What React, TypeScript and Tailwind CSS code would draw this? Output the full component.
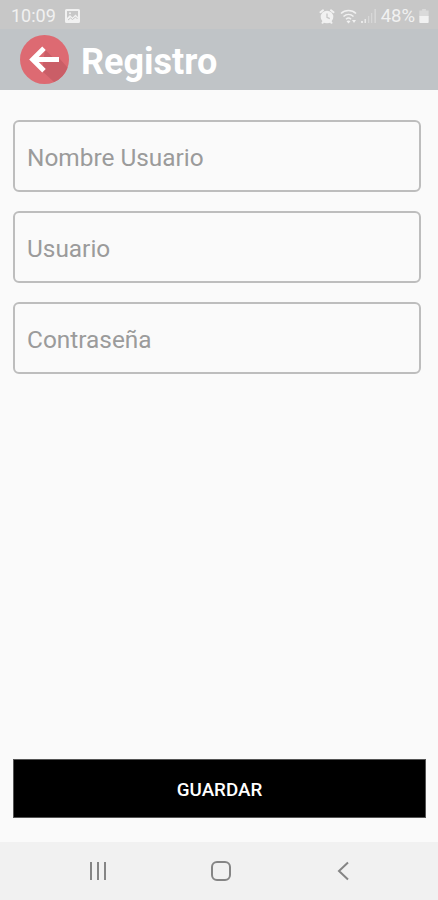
import React from 'react';

interface FieldProps {
    name: string;
    label: string;
    type?: string;
}

function Field({ name, label, type = 'text' }: FieldProps) {
    return (
        <input
            name={name}
            type={type}
            placeholder={label}
            className="block h-[72px] w-full rounded-md border-2 border-[#bdbdbd] bg-transparent px-3 pt-[3px] text-[24.4px] text-[#444] outline-none placeholder:text-[#9b9b9b]"
        />
    );
}

function StatusBar() {
    return (
        <div className="flex h-[29px] items-center justify-between bg-[#c7c7c7] pt-[3px] pr-[9px] pl-[11px] text-[#f1f1f1]">
            <div className="flex items-center gap-[9px]">
                <span className="text-[18px] leading-none">10:09</span>
                <svg className="h-[14px] w-[15px]" viewBox="0 0 15 14">
                    <path
                        fill="currentColor"
                        fillRule="evenodd"
                        d="M1.5 0h12A1.5 1.5 0 0 1 15 1.5v11a1.5 1.5 0 0 1-1.5 1.5h-12A1.5 1.5 0 0 1 0 12.5v-11A1.5 1.5 0 0 1 1.5 0zM2 2v10h11V2z"
                    />
                    <path fill="currentColor" d="M2 12V9l3-3 2.5 2.5L10.5 5.5 13 8v4z" />
                    <circle cx="5" cy="4.3" r="1" fill="currentColor" />
                    <path stroke="#c7c7c7" strokeWidth="1" fill="none" d="M3 11l2.5-2 2 1.5 3-2.5 2 2" />
                </svg>
            </div>
            <div className="flex items-center">
                {/* alarm */}
                <svg className="h-[15px] w-4" viewBox="0 0 16 15">
                    <circle cx="8" cy="8" r="6.3" fill="currentColor" />
                    <path
                        stroke="currentColor"
                        strokeWidth="2"
                        strokeLinecap="round"
                        d="M1.5 3.2L4 1.3M14.5 3.2L12 1.3M3.5 13.8l1.5-2M12.5 13.8l-1.5-2"
                    />
                    <path stroke="#c7c7c7" strokeWidth="1.3" fill="none" d="M8 4.5V8.3l2.8 1.4" />
                </svg>
                {/* wifi */}
                <svg className="ml-[5px] h-[15px] w-[17px]" viewBox="0 0 17 15" fill="none" stroke="currentColor">
                    <path strokeWidth="1.5" d="M1 4.5C5 .5 12 .5 16 4.5M3.500 7.500c3-2.800 7-2.800 10 0M6 10.200c1.500-1.400 3.500-1.400 5 0" />
                    <path fill="currentColor" stroke="none" d="M8.500 14.500l-2-2.300c1.200-1 2.800-1 4 0zM12 11h4l-2 3z" />
                </svg>
                {/* signal */}
                <svg className="ml-1 h-4 w-4" viewBox="0 0 16 16" fill="currentColor">
                    <path opacity=".8" d="M0 13h2v2H0zM3.500 11h1.500v4H3.500z" />
                    <path opacity=".4" d="M7 8h1.300v7H7zM10 5h1.300v10H10z" />
                    <path opacity=".5" d="M13.500 1h1.300v14h-1.300z" />
                </svg>
                <span className="ml-1 text-[18.5px] leading-none">48%</span>
                {/* battery */}
                <svg className="ml-1 h-[14px] w-[10px]" viewBox="0 0 10 15" fill="currentColor">
                    <path opacity=".45" d="M3 0h4v1.500h3V8H0V1.500h3z" />
                    <path d="M0 7.500h10V14a1 1 0 0 1-1 1H1a1 1 0 0 1-1-1z" />
                </svg>
            </div>
        </div>
    );
}

function Header() {
    return (
        <header className="flex h-[61px] items-center gap-3 bg-[#c0c4c7] pl-5">
            <button type="button" aria-label="Volver" className="shrink-0">
                <svg className="h-[49px] w-[49px]" viewBox="0 0 49 49">
                    <circle cx="24.5" cy="24.5" r="24.5" fill="#dd6a72" />
                    {/* long shadow under the arrow */}
                    <path fill="#ca5e67" d="M25 14.5l8.500 8.500H39l8.500 9.500A24.500 24.500 0 0 1 34 47.100L22 36z" />
                    <path
                        fill="none"
                        stroke="#fff"
                        strokeWidth="5"
                        d="M39 24.500H13M24 13.200L12.700 24.500 24 35.800"
                    />
                </svg>
            </button>
            <h1 className="pt-1 text-[36px] leading-none font-bold text-white">Registro</h1>
        </header>
    );
}

function NavBar() {
    return (
        <nav className="flex h-[58px] items-center bg-[#f1f1f1] pl-[88px] text-[#858585]">
            <svg className="h-5 w-5" viewBox="0 0 20 20" stroke="currentColor" strokeWidth="2">
                <path d="M3 1v18M10 1v18M17 1v18" />
            </svg>
            <svg className="ml-[102px] h-[22px] w-[22px]" viewBox="0 0 22 22" fill="none" stroke="currentColor" strokeWidth="2">
                <rect x="2" y="2" width="18" height="18" rx="5" />
            </svg>
            <svg className="ml-[105px] h-5 w-3" viewBox="0 0 12 20" fill="none" stroke="currentColor" strokeWidth="2">
                <path d="M11 1.500L2 10l9 8.500" />
            </svg>
        </nav>
    );
}

export default function App() {
    return (
        <div className="flex h-screen w-full flex-col bg-[#fafafa] font-['Roboto',sans-serif]">
            <StatusBar />
            <Header />
            <form className="flex flex-1 flex-col pt-[30px] pr-[12px] pb-6 pl-[13px]" onSubmit={(e) => e.preventDefault()}>
                <div className="flex flex-col gap-[19px] pr-[5px]">
                    <Field name="nombre" label="Nombre Usuario" />
                    <Field name="usuario" label="Usuario" />
                    <Field name="password" label="Contraseña" type="password" />
                </div>
                <button type="submit" className="mt-auto h-[59px] border border-[#555] bg-black pt-1 text-[18.8px] font-medium text-white">
                    GUARDAR
                </button>
            </form>
            <NavBar />
        </div>
    );
}
